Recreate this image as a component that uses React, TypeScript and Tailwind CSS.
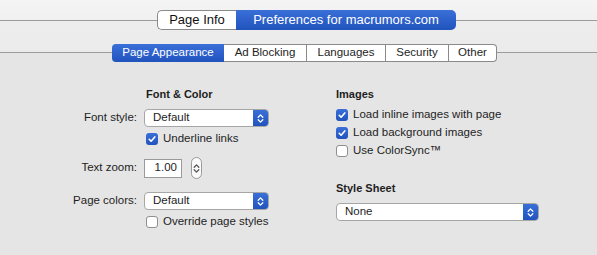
import React from "react";

const BLUE = "bg-[linear-gradient(to_bottom,#3a6fd8,#2153bd)]";

function Chevrons({ color = "white" }: { color?: string }) {
  return (
    <svg width="7" height="11" viewBox="0 0 7 11" fill="none">
      <path d="M1.2 4.2L3.5 1.9L5.8 4.2" stroke={color} strokeWidth="1.3" strokeLinecap="round" strokeLinejoin="round" />
      <path d="M1.2 6.8L3.5 9.1L5.8 6.8" stroke={color} strokeWidth="1.3" strokeLinecap="round" strokeLinejoin="round" />
    </svg>
  );
}

function Select({ value, width }: { value: string; width: string }) {
  return (
    <div className={`flex h-[18px] ${width} rounded-[4px] border border-[#a6a6a6] bg-white overflow-hidden`}>
      <div className="flex-1 flex items-center pl-[8px] text-[11.5px] text-[#1e1e1e]">{value}</div>
      <div className={`w-[15px] flex items-center justify-center ${BLUE}`}>
        <Chevrons />
      </div>
    </div>
  );
}

function Checkbox({ checked }: { checked: boolean }) {
  if (checked) {
    return (
      <div className={`w-[12px] h-[12px] rounded-[3px] ${BLUE} flex items-center justify-center shrink-0`}>
        <svg width="12" height="12" viewBox="0 0 12 12" fill="none">
          <path d="M3.2 6.3L5.1 8.2L8.8 3.9" stroke="white" strokeWidth="1.6" strokeLinecap="round" strokeLinejoin="round" />
        </svg>
      </div>
    );
  }
  return <div className="w-[12px] h-[12px] rounded-[3px] border border-[#8f8f8f] bg-white shrink-0" />;
}

function CheckRow({ checked, label, h }: { checked: boolean; label: string; h: string }) {
  return (
    <div className={`flex items-center gap-[5px] ${h}`}>
      <Checkbox checked={checked} />
      <span>{label}</span>
    </div>
  );
}

export default function App() {
  return (
    <div className="w-[597px] h-[255px] overflow-hidden text-[11.5px] text-[#1e1e1e] font-['Liberation_Sans',Arial,sans-serif] bg-[linear-gradient(to_bottom,#f4f4f4_0px,#f0f0f0_20px,#9c9c9c_20px,#9c9c9c_21px,#ededed_21px,#ebebeb_52px,#9c9c9c_52px,#9c9c9c_53px,#e5e5e5_53px)]">
      {/* Top segmented control */}
      <div className="flex pl-[157px] pt-[10px]">
        <div className="flex h-[20px] text-[13px]">
          <div className="w-[79px] flex items-center justify-center bg-white border border-r-0 border-[#8a8a8a] rounded-l-[5px] text-[#111]">
            Page Info
          </div>
          <div className={`w-[220px] flex items-center justify-center ${BLUE} rounded-r-[5px] text-white`}>
            Preferences for macrumors.com
          </div>
        </div>
      </div>

      {/* Second segmented control */}
      <div className="flex pl-[112px] pt-[14px]">
        <div className="flex h-[18px] text-[11.5px]">
          <div className={`w-[112px] flex items-center justify-center ${BLUE} rounded-l-[4px] text-white`}>
            Page Appearance
          </div>
          <div className="w-[83px] flex items-center justify-center bg-white border-y border-r border-[#8a8a8a]">
            Ad Blocking
          </div>
          <div className="w-[79px] flex items-center justify-center bg-white border-y border-r border-[#8a8a8a]">
            Languages
          </div>
          <div className="w-[63px] flex items-center justify-center bg-white border-y border-r border-[#8a8a8a]">
            Security
          </div>
          <div className="w-[48px] flex items-center justify-center bg-white border-y border-r border-[#8a8a8a] rounded-r-[4px]">
            Other
          </div>
        </div>
      </div>

      {/* Content */}
      <div className="flex pt-[25px]">
        {/* Left column */}
        <div className="w-[336px] shrink-0 flex flex-col">
          <div className="flex h-[14px] items-center">
            <div className="w-[137px]" />
            <div className="ml-[9px] font-bold text-[11px]">Font &amp; Color</div>
          </div>
          <div className="flex h-[18px] items-center mt-[8px]">
            <div className="w-[137px] text-right">Font style:</div>
            <div className="ml-[7px]">
              <Select value="Default" width="w-[125px]" />
            </div>
          </div>
          <div className="flex mt-[4px]">
            <div className="w-[137px]" />
            <div className="ml-[9px]">
              <CheckRow checked label="Underline links" h="h-[16px]" />
            </div>
          </div>
          <div className="flex h-[22px] items-center mt-[10px]">
            <div className="w-[137px] text-right">Text zoom:</div>
            <div className="ml-[7px] flex items-center">
              <div className="w-[38px] h-[19px] bg-white border border-[#9a9a9a] flex items-center justify-end pr-[4px]">
                1.00
              </div>
              <div className="ml-[9px] w-[11px] h-[22px] rounded-full border border-[#9a9a9a] bg-[#fafafa] flex items-center justify-center">
                <Chevrons color="#555" />
              </div>
            </div>
          </div>
          <div className="flex h-[18px] items-center mt-[13px]">
            <div className="w-[137px] text-right">Page colors:</div>
            <div className="ml-[7px]">
              <Select value="Default" width="w-[125px]" />
            </div>
          </div>
          <div className="flex mt-[4px]">
            <div className="w-[137px]" />
            <div className="ml-[9px]">
              <CheckRow checked={false} label="Override page styles" h="h-[16px]" />
            </div>
          </div>
        </div>

        {/* Right column */}
        <div className="flex flex-col">
          <div className="h-[14px] flex items-center font-bold text-[11px]">Images</div>
          <div className="mt-[5px] flex flex-col">
            <CheckRow checked label="Load inline images with page" h="h-[18px]" />
            <CheckRow checked label="Load background images" h="h-[18px]" />
            <CheckRow checked={false} label="Use ColorSync™" h="h-[18px]" />
          </div>
          <div className="mt-[21px] h-[14px] flex items-center font-bold text-[11px]">Style Sheet</div>
          <div className="mt-[8px]">
            <Select value="None" width="w-[203px]" />
          </div>
        </div>
      </div>
    </div>
  );
}
